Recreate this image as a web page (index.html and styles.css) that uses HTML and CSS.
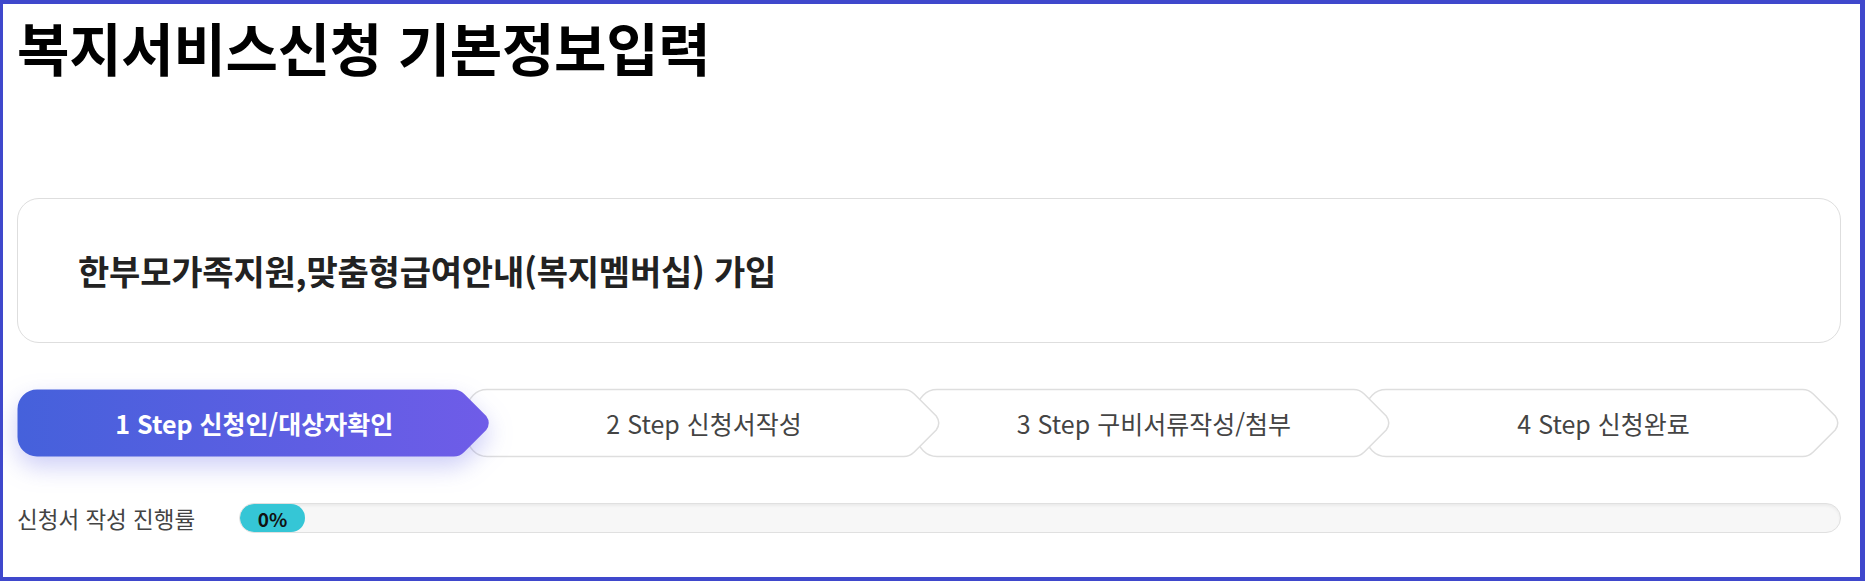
FILE: index.html
```html
<!DOCTYPE html>
<html lang="ko">
<head>
<meta charset="utf-8">
<title>복지서비스신청 기본정보입력</title>
<link rel="stylesheet" href="styles.css">
</head>
<body>
<div class="frame">
  <h1 class="title">복지서비스신청 기본정보입력</h1>

  <section class="card">
    <h2 class="card-title">한부모가족지원,맞춤형급여안내(복지멤버십) 가입</h2>
  </section>

  <ol class="steps">
    <li class="step step-active">
      <svg class="step-bg" viewBox="0 0 475 68" preserveAspectRatio="none" aria-hidden="true">
        <defs>
          <linearGradient id="stepGrad" x1="0" y1="0" x2="1" y2="0">
            <stop offset="0" stop-color="#4561db"/>
            <stop offset="1" stop-color="#6f5ce8"/>
          </linearGradient>
        </defs>
        <path class="step-shape" d="M20 0.5 L437 0.5 Q443 0.5 447.5 5 L469.5 27 Q474.5 34 469.5 41 L447.5 63 Q443 67.5 437 67.5 L20 67.5 A19.5 19.5 0 0 1 0.5 48 L0.5 20 A19.5 19.5 0 0 1 20 0.5 Z"/>
      </svg>
      <span class="step-label">1 Step 신청인/대상자확인</span>
    </li>
    <li class="step">
      <svg class="step-bg" viewBox="0 0 475 68" preserveAspectRatio="none" aria-hidden="true">
        <path class="step-shape" d="M20 0.5 L437 0.5 Q443 0.5 447.5 5 L469.5 27 Q474.5 34 469.5 41 L447.5 63 Q443 67.5 437 67.5 L20 67.5 A19.5 19.5 0 0 1 0.5 48 L0.5 20 A19.5 19.5 0 0 1 20 0.5 Z"/>
      </svg>
      <span class="step-label">2 Step 신청서작성</span>
    </li>
    <li class="step">
      <svg class="step-bg" viewBox="0 0 475 68" preserveAspectRatio="none" aria-hidden="true">
        <path class="step-shape" d="M20 0.5 L437 0.5 Q443 0.5 447.5 5 L469.5 27 Q474.5 34 469.5 41 L447.5 63 Q443 67.5 437 67.5 L20 67.5 A19.5 19.5 0 0 1 0.5 48 L0.5 20 A19.5 19.5 0 0 1 20 0.5 Z"/>
      </svg>
      <span class="step-label">3 Step 구비서류작성/첨부</span>
    </li>
    <li class="step">
      <svg class="step-bg" viewBox="0 0 475 68" preserveAspectRatio="none" aria-hidden="true">
        <path class="step-shape" d="M20 0.5 L437 0.5 Q443 0.5 447.5 5 L469.5 27 Q474.5 34 469.5 41 L447.5 63 Q443 67.5 437 67.5 L20 67.5 A19.5 19.5 0 0 1 0.5 48 L0.5 20 A19.5 19.5 0 0 1 20 0.5 Z"/>
      </svg>
      <span class="step-label">4 Step 신청완료</span>
    </li>
  </ol>

  <div class="progress">
    <span class="progress-label">신청서 작성 진행률</span>
    <div class="progress-track">
      <div class="progress-fill" style="width: 65px;">0%</div>
    </div>
  </div>
</div>
</body>
</html>
```

FILE: styles.css
```css
* {
  box-sizing: border-box;
}

html, body {
  margin: 0;
  padding: 0;
  background: #ffffff;
}

body {
  font-family: "Noto Sans CJK KR", "Noto Sans", sans-serif;
  color: #222;
}

.frame {
  width: 1865px;
  height: 581px;
  border-style: solid;
  border-color: #3f48cc;
  border-width: 4px 5px 4px 3px;
  padding: 6px 19px 0 14px;
  overflow: hidden;
}

.title {
  margin: 0;
  font-size: 57px;
  font-weight: 700;
  line-height: 72px;
  letter-spacing: -0.3px;
  color: #000;
}

.card {
  margin-top: 116px;
  height: 145px;
  border: 1px solid #dedede;
  border-radius: 22px;
  display: flex;
  align-items: center;
  padding: 0 0 0 60px;
}

.card-title {
  margin: 0;
  font-size: 34px;
  font-weight: 700;
  letter-spacing: -0.2px;
  color: #222;
  line-height: 1.4;
}

.steps {
  list-style: none;
  margin: 46px 0 0 0;
  padding: 0;
  display: flex;
  height: 68px;
}

.step {
  position: relative;
  flex: 1 1 0;
  display: flex;
  align-items: center;
  justify-content: center;
  height: 68px;
}

.step + .step {
  margin-left: -25px;
}

.step:nth-child(1) { z-index: 4; }
.step:nth-child(2) { z-index: 3; }
.step:nth-child(3) { z-index: 2; }
.step:nth-child(4) { z-index: 1; }

.step-bg {
  position: absolute;
  left: 0;
  top: 0;
  width: 100%;
  height: 100%;
  overflow: visible;
}

.step-shape {
  fill: #ffffff;
  stroke: #dedede;
  stroke-width: 1.5;
  vector-effect: non-scaling-stroke;
}

.step-active .step-shape {
  fill: url(#stepGrad);
  stroke: none;
}

.step-active .step-bg {
  filter: drop-shadow(0 10px 12px rgba(90, 92, 230, 0.3));
}

.step-label {
  position: relative;
  font-size: 25px;
  color: #444;
  letter-spacing: 0;
  white-space: nowrap;
}

.step-active .step-label {
  color: #fff;
  font-weight: 700;
}

.progress {
  margin-top: 46px;
  display: flex;
  align-items: center;
  height: 30px;
}

.progress-label {
  width: 222px;
  flex: 0 0 222px;
  font-size: 22.5px;
  color: #444;
  letter-spacing: 0;
  white-space: nowrap;
}

.progress-track {
  flex: 1 1 auto;
  height: 30px;
  border: 1px solid #e0e0e0;
  border-radius: 15px;
  background: #f7f7f7;
  box-shadow: inset 0 2px 3px rgba(0, 0, 0, 0.05);
  overflow: hidden;
}

.progress-fill {
  height: 100%;
  border-radius: 15px;
  background: #35c6d6;
  color: #111;
  font-size: 19px;
  font-weight: 700;
  display: flex;
  align-items: center;
  justify-content: center;
}
```
